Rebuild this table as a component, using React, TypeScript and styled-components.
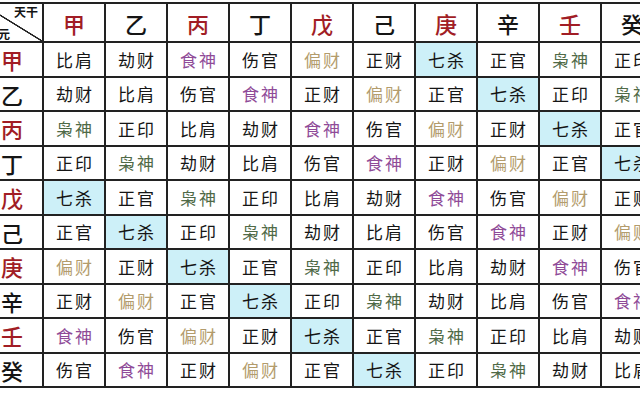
import React from 'react'
import styled, { createGlobalStyle, css } from 'styled-components'

const GlobalStyle = createGlobalStyle`
  html, body { margin: 0; padding: 0; background: #fff; }
  body { font-family: "Noto Sans CJK SC", "Noto Sans", sans-serif; color: #151515; }
  * { box-sizing: border-box; }
`

const stems = ['甲', '乙', '丙', '丁', '戊', '己', '庚', '辛', '壬', '癸']
const gods = ['比肩', '劫财', '食神', '伤官', '偏财', '正财', '七杀', '正官', '枭神', '正印']

// ten gods for day stem r against stem c
const godOf = (r, c) => {
  const re = Math.floor(r / 2)
  const ce = Math.floor(c / 2)
  const rel = (ce - re + 5) % 5
  const same = r % 2 === c % 2
  return gods[rel * 2 + (same ? 0 : 1)]
}

const godColor = {
  食神: '#8f4b98',
  偏财: '#b39c6c',
  枭神: '#4f6a47',
}

const Frame = styled.div`
  width: 640px;
  height: 400px;
  overflow: hidden;
  background: #fff;
`

const Grid = styled.div`
  display: grid;
  grid-template-columns: repeat(11, 62px);
  grid-template-rows: 39px repeat(10, 34.5px);
  margin: 2px 0 0 -20px;
  width: max-content;
  border-top: 2px solid #222;
  border-left: 2px solid #222;
`

const cellBase = css`
  border-right: 2px solid #222;
  border-bottom: 2px solid #222;
  display: flex;
  align-items: center;
  justify-content: center;
  white-space: nowrap;
`

const Corner = styled.div`
  ${cellBase};
  flex-direction: column;
  align-items: stretch;
  justify-content: space-between;
  padding: 1px 4px 0;
  font-size: 12px;
  font-weight: 700;
  line-height: 14px;
  background: linear-gradient(to top right, transparent calc(50% - 1px), #222 calc(50% - 0.5px), #222 calc(50% + 0.5px), transparent calc(50% + 1px));
`

const CornerLabel = styled.span`
  text-align: ${p => (p.end ? 'right' : 'left')};
`

const StemHead = styled.div`
  ${cellBase};
  font-size: 22px;
  font-weight: 500;
  color: ${p => (p.yang ? '#a11d25' : '#151515')};
`

const GodCell = styled.div`
  ${cellBase};
  font-size: 17px;
  letter-spacing: 2px;
  padding-left: 2px;
  color: ${p => godColor[p.god] || '#151515'};
  background: ${p => (p.god === '七杀' ? '#cdf0f8' : '#fff')};
`

export default function App() {
  return (
    <>
      <GlobalStyle />
      <Frame>
        <Grid>
          <Corner>
            <CornerLabel end>天干</CornerLabel>
            <CornerLabel>日元</CornerLabel>
          </Corner>
          {stems.map((s, i) => (
            <StemHead key={s} yang={i % 2 === 0}>{s}</StemHead>
          ))}
          {stems.map((s, r) => (
            <React.Fragment key={s}>
              <StemHead yang={r % 2 === 0}>{s}</StemHead>
              {stems.map((_, c) => {
                const g = godOf(r, c)
                return <GodCell key={c} god={g}>{g}</GodCell>
              })}
            </React.Fragment>
          ))}
        </Grid>
      </Frame>
    </>
  )
}
